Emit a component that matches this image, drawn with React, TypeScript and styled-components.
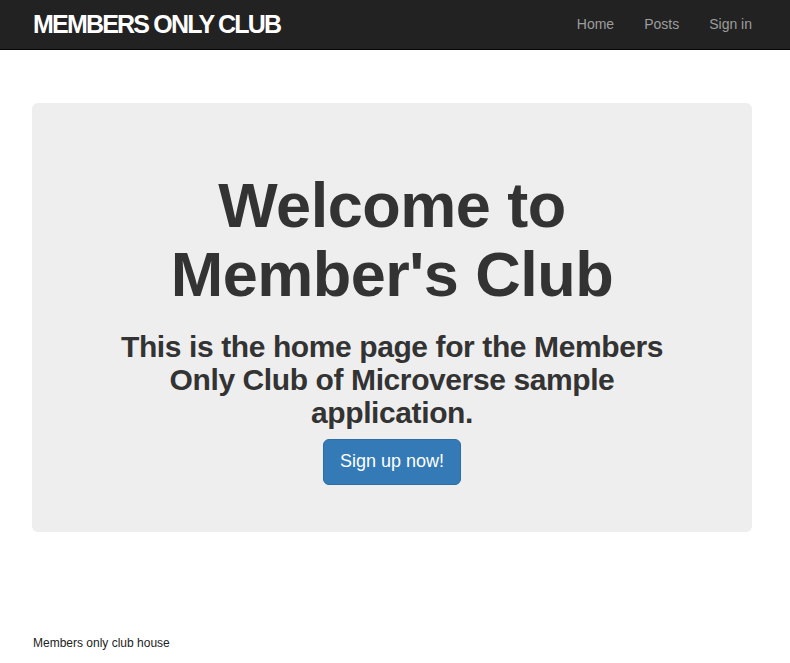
import React from "react";
import styled, { createGlobalStyle } from "styled-components";

const Global = createGlobalStyle`
  html, body { margin: 0; padding: 0; background: #fff; }
  body {
    font-family: "Liberation Sans", Arial, Helvetica, sans-serif;
    font-size: 14px;
    line-height: 1.42857;
    color: #333;
  }
  * { box-sizing: border-box; }
`;

const Navbar = styled.nav`
  height: 50px;
  background: #222;
  border-bottom: 1px solid #080808;
`;

const NavInner = styled.div`
  width: 720px;
  margin: 0 0 0 32px;
  height: 100%;
  display: flex;
  align-items: center;
  justify-content: space-between;
`;

const Brand = styled.a`
  color: #fff;
  font-weight: 700;
  font-size: 25px;
  letter-spacing: -1.8px;
  text-decoration: none;
  margin-left: 1px;
`;

const NavList = styled.ul`
  list-style: none;
  margin: 0;
  padding: 0;
  display: flex;
  height: 100%;
`;

const NavItem = styled.li`
  display: flex;
  height: 100%;
  padding: 0 15px;
  &:last-child { padding-right: 0; }
`;

const NavLink = styled.a`
  display: flex;
  align-items: center;
  color: #9d9d9d;
  text-decoration: none;
  font-size: 14px;
`;

const Main = styled.main`
  width: 720px;
  margin: 53px 0 0 32px;
`;

const Jumbotron = styled.section`
  background: #eee;
  border-radius: 6px;
  padding: 48px 60px;
  height: 429px;
  text-align: center;
`;

const Title = styled.h1`
  font-size: 63px;
  line-height: 1.1;
  font-weight: 700;
  letter-spacing: -0.5px;
  margin: 20px 0 10px;
  color: #333;
`;

const Subtitle = styled.h2`
  font-size: 30px;
  line-height: 1.1;
  font-weight: 700;
  letter-spacing: -0.4px;
  margin: 20px 0 10px;
  color: #333;
`;

const PrimaryButton = styled.a`
  display: inline-block;
  padding: 10px 16px;
  font-size: 18px;
  line-height: 1.3333;
  border-radius: 6px;
  background: #337ab7;
  border: 1px solid #2e6da4;
  color: #fff;
  text-decoration: none;
`;

const Footer = styled.footer`
  width: 720px;
  margin: 103px 0 0 33px;
  font-size: 12px;
  color: #222;
`;

export default function App() {
  return (
    <>
      <Global />
      <Navbar>
        <NavInner>
          <Brand href="#">MEMBERS ONLY CLUB</Brand>
          <NavList>
            <NavItem><NavLink href="#">Home</NavLink></NavItem>
            <NavItem><NavLink href="#">Posts</NavLink></NavItem>
            <NavItem><NavLink href="#">Sign in</NavLink></NavItem>
          </NavList>
        </NavInner>
      </Navbar>
      <Main>
        <Jumbotron>
          <Title>Welcome to Member's Club</Title>
          <Subtitle>This is the home page for the Members Only Club of Microverse sample application.</Subtitle>
          <PrimaryButton href="#">Sign up now!</PrimaryButton>
        </Jumbotron>
      </Main>
      <Footer>Members only club house</Footer>
    </>
  );
}
